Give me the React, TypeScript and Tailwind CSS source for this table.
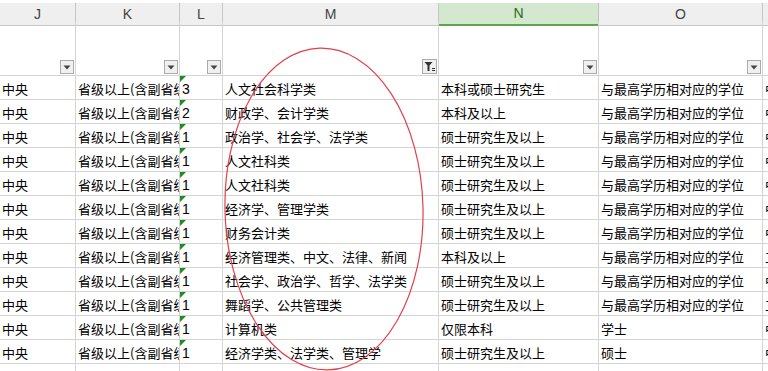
import React from "react";

type Row = [string, string, string, string, string, string, string];

const rows: Row[] = [
    ["中央", "省级以上(含副省级)", "3", "人文社会科学类", "本科或硕士研究生", "与最高学历相对应的学位", "中"],
    ["中央", "省级以上(含副省级)", "2", "财政学、会计学类", "本科及以上", "与最高学历相对应的学位", "中"],
    ["中央", "省级以上(含副省级)", "1", "政治学、社会学、法学类", "硕士研究生及以上", "与最高学历相对应的学位", "中"],
    ["中央", "省级以上(含副省级)", "1", "人文社科类", "硕士研究生及以上", "与最高学历相对应的学位", "中"],
    ["中央", "省级以上(含副省级)", "1", "人文社科类", "硕士研究生及以上", "与最高学历相对应的学位", "中"],
    ["中央", "省级以上(含副省级)", "1", "经济学、管理学类", "硕士研究生及以上", "与最高学历相对应的学位", "中"],
    ["中央", "省级以上(含副省级)", "1", "财务会计类", "硕士研究生及以上", "与最高学历相对应的学位", "中"],
    ["中央", "省级以上(含副省级)", "1", "经济管理类、中文、法律、新闻", "本科及以上", "与最高学历相对应的学位", "工"],
    ["中央", "省级以上(含副省级)", "1", "社会学、政治学、哲学、法学类", "硕士研究生及以上", "与最高学历相对应的学位", "中"],
    ["中央", "省级以上(含副省级)", "1", "舞蹈学、公共管理类", "硕士研究生及以上", "与最高学历相对应的学位", "工"],
    ["中央", "省级以上(含副省级)", "1", "计算机类", "仅限本科", "学士", "中"],
    ["中央", "省级以上(含副省级)", "1", "经济学类、法学类、管理学", "硕士研究生及以上", "硕士", "中"],
];

// column widths in px, first and last columns are cut by the window
const cols = "grid-cols-[76px_104px_43px_216px_160px_164px_40px]";

function DropButton() {
    return (
        <div className="w-[14px] h-[14px] border border-[#ababab] bg-[#f0f0f0] flex items-center justify-center">
            <svg width="8" height="5" viewBox="0 0 8 5">
                <path d="M0.5 0.5 L7.5 0.5 L4 4.5 Z" fill="#444" />
            </svg>
        </div>
    );
}

function FilterButton() {
    return (
        <div className="w-[15px] h-[15px] border border-[#ababab] bg-[#f0f0f0] flex items-center justify-center">
            <svg width="13" height="13" viewBox="0 0 13 13">
                <path d="M1.5 2 L9.5 2 L6.5 5.5 L6.5 11 L4.5 11 L4.5 5.5 Z" fill="#333" />
                <rect x="9" y="8" width="3" height="1" fill="#333" />
                <rect x="9" y="10" width="3" height="1" fill="#333" />
            </svg>
        </div>
    );
}

export default function App() {
    const letters = ["J", "K", "L", "M", "N", "O", ""];
    const cell = "border-r border-b border-[#d4d4d4] overflow-hidden whitespace-nowrap";

    return (
        <div
            className="relative w-[768px] h-[371px] overflow-hidden bg-white text-[13px] text-black"
            style={{ fontFamily: '"Noto Sans CJK SC", "Liberation Sans", sans-serif' }}
        >
            <div className="h-[3px] bg-white" />

            {/* column letters */}
            <div className={`grid ${cols} h-[18px]`}>
                {letters.map((l, i) => (
                    <div
                        key={i}
                        className={
                            i === 4
                                ? "bg-[#d3e8cf] border-r border-[#c0c0c0] border-b-2 border-b-[#5da548] flex items-center justify-center text-[#2e6b22] text-[14px] font-['Liberation_Sans']"
                                : "bg-[#efefef] border-r border-b border-[#c6c6c6] flex items-center justify-center text-[#444] text-[14px] font-['Liberation_Sans']"
                        }
                    >
                        {l}
                    </div>
                ))}
            </div>

            {/* tall filter row */}
            <div className={`grid ${cols} h-[55px]`}>
                {letters.map((_, i) => (
                    <div key={i} className={`${cell} flex items-end justify-end pb-[1px] pr-[1px]`}>
                        {i === 3 ? <FilterButton /> : i < 6 ? <DropButton /> : null}
                    </div>
                ))}
            </div>

            {rows.map((r, ri) => (
                <div key={ri} className={`grid ${cols} h-[24px]`}>
                    {r.map((v, ci) => (
                        <div key={ci} className={`${cell} relative flex items-end pb-[2px] pl-[2px] leading-[16px]`}>
                            {ci === 2 && (
                                <div className="absolute left-0 top-0 w-0 h-0 border-t-[6px] border-t-[#1f8a1f] border-r-[6px] border-r-transparent" />
                            )}
                            <span className={ci === 2 ? "font-['Liberation_Sans'] text-[14px]" : ""}>{v}</span>
                        </div>
                    ))}
                </div>
            ))}
            <div className={`grid ${cols} h-[24px]`}>
                {letters.map((_, i) => (
                    <div key={i} className={cell} />
                ))}
            </div>

            {/* hand-drawn red ring over column M */}
            <svg className="absolute inset-0 pointer-events-none" width="768" height="371">
                <ellipse
                    cx="324"
                    cy="209"
                    rx="99"
                    ry="161"
                    fill="none"
                    stroke="#e0404a"
                    strokeWidth="1.2"
                    transform="rotate(-1.5 324 209)"
                />
            </svg>
        </div>
    );
}
